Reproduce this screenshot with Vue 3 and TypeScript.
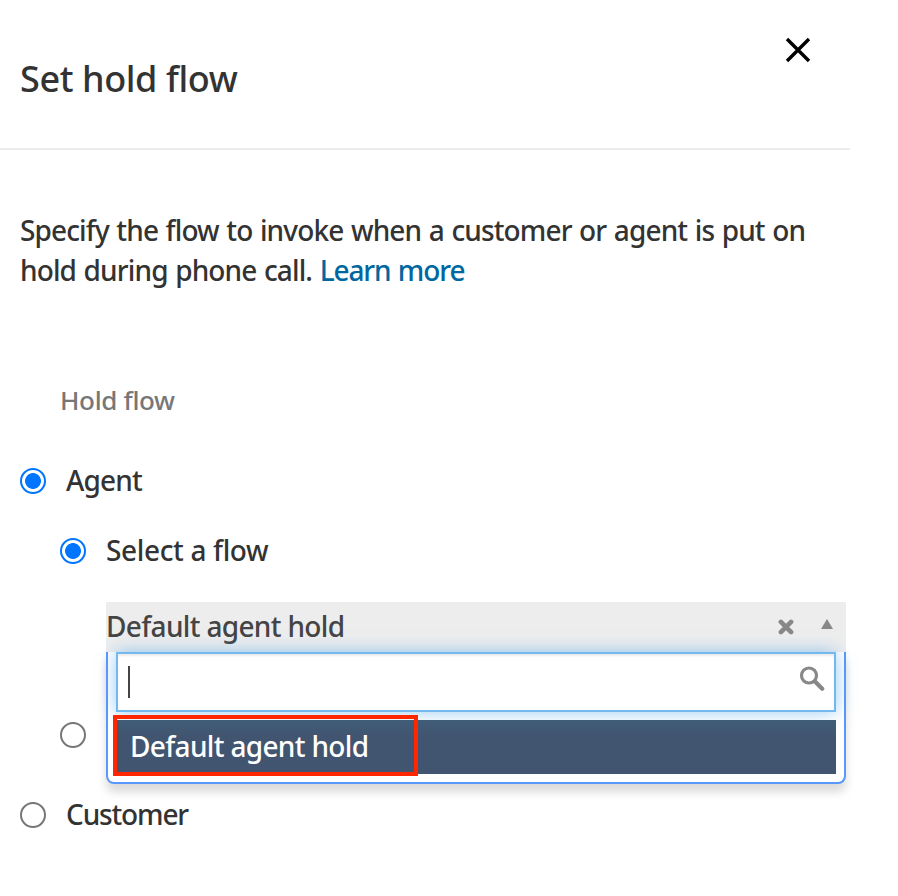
<script setup lang="ts">
import { ref } from 'vue'

const target = ref<'agent' | 'customer'>('agent')
const source = ref<'flow' | 'attribute'>('flow')
const selectedFlow = ref('Default agent hold')
const flows: string[] = ['Default agent hold']
</script>

<template>
  <main class="dialog">
    <header class="header">
      <h1 class="title">Set hold flow</h1>
      <button class="close" type="button" aria-label="Close">
        <svg width="26" height="26" viewBox="0 0 26 26">
          <path d="M2 2 24 24M24 2 2 24" fill="none" stroke="#000" stroke-width="3.4" />
        </svg>
      </button>
    </header>

    <p class="intro">
      Specify the flow to invoke when a customer or agent is put on<br />
      hold during phone call. <a>Learn more</a>
    </p>

    <h2 class="section">Hold flow</h2>

    <div class="row agent" @click="target = 'agent'">
      <span class="radio" :class="{ on: target === 'agent' }"></span>
      <span class="label">Agent</span>
    </div>

    <div class="nested">
      <div class="row" @click="source = 'flow'">
        <span class="radio" :class="{ on: source === 'flow' }"></span>
        <span class="label wide">Select a flow</span>
      </div>

      <div class="select">
        <div class="field">
          <span class="value">{{ selectedFlow }}</span>
          <svg class="clear" width="16" height="16" viewBox="0 0 16 16">
            <path d="M2.9 2.9 13.1 13.1M13.1 2.9 2.9 13.1" fill="none" stroke="#888" stroke-width="4.6" stroke-linecap="round" />
          </svg>
          <svg class="arrow" width="12" height="10" viewBox="0 0 12 10">
            <path d="M6 0 12 10H0z" fill="#888" />
          </svg>
        </div>
        <div class="panel">
          <div class="search">
            <span class="caret"></span>
            <svg class="glass" width="26" height="26" viewBox="0 0 26 26">
              <circle cx="10" cy="9.5" r="7.5" fill="none" stroke="#888" stroke-width="3.2" />
              <path d="M15.8 15.3 23.2 22.7" fill="none" stroke="#888" stroke-width="4.2" stroke-linecap="round" />
            </svg>
          </div>
          <div v-for="flow in flows" :key="flow" class="option">
            <span>{{ flow }}</span>
            <span class="highlight"></span>
          </div>
        </div>
      </div>

      <div class="row" @click="source = 'attribute'">
        <span class="radio" :class="{ on: source === 'attribute' }"></span>
      </div>
    </div>

    <div class="row customer" @click="target = 'customer'">
      <span class="radio" :class="{ on: target === 'customer' }"></span>
      <span class="label narrow">Customer</span>
    </div>
  </main>
</template>

<style>
body {
  background: #fff;
}
</style>

<style scoped>
.dialog {
  box-sizing: border-box;
  width: 850px;
  height: 896px;
  color: #333;
  font-family: "Noto Sans", "Open Sans", sans-serif;
  font-size: 28px;
  font-weight: 500;
  letter-spacing: -0.66px;
  line-height: 40px;
  white-space: nowrap;
}
.header {
  box-sizing: border-box;
  display: flex;
  justify-content: space-between;
  align-items: flex-start;
  height: 150px;
  padding: 37px 39px 0 20px;
  border-bottom: 2px solid #ededed;
}
.title {
  margin: 17px 0 0;
  font-size: 36px;
  font-weight: 500;
  letter-spacing: -0.4px;
  line-height: 50px;
}
.close {
  display: flex;
  padding: 0;
  border: 0;
  background: none;
}
.intro {
  margin: 60px 0 0 20px;
  letter-spacing: -0.87px;
  word-spacing: 1.1px;
}
.intro a {
  color: #0067a0;
  letter-spacing: -1.1px;
}
.section {
  margin: 90px 0 0 60px;
  color: #777;
  font-size: 26px;
  font-weight: 500;
  letter-spacing: -0.35px;
  line-height: 40px;
}
.row {
  display: flex;
  align-items: center;
  gap: 20px;
  height: 40px;
}
.label {
  padding-bottom: 2px;
  letter-spacing: -0.85px;
}
.label.wide {
  letter-spacing: -0.35px;
}
.label.narrow {
  letter-spacing: -1.15px;
}
.agent {
  margin: 41px 0 0 20px;
}
.nested {
  margin: 30px 0 0 60px;
}
.radio {
  box-sizing: border-box;
  flex: none;
  width: 26px;
  height: 26px;
  border: 2px solid #767676;
  border-radius: 50%;
  background: #fff;
}
.radio.on {
  border-color: #0075ff;
  background: radial-gradient(circle, #0075ff 7.5px, #fff 8.3px);
}
.select {
  position: relative;
  width: 740px;
  height: 50px;
  margin: 31px 0 63px 46px;
}
.field {
  box-sizing: border-box;
  display: flex;
  align-items: center;
  height: 50px;
  padding-right: 13px;
  background: #ededed;
  color: #444;
}
.value {
  flex: 1;
  padding-bottom: 2px;
}
.clear {
  margin: 0 27.5px 0 0;
}
.arrow {
  margin-top: -6px;
}
.panel {
  box-sizing: border-box;
  position: absolute;
  top: 50px;
  left: 0;
  width: 740px;
  height: 132px;
  padding: 0 8px;
  border: 2px solid #5897fb;
  border-top: 0;
  border-radius: 0 0 8px 8px;
  background: #fff;
  box-shadow: 0 8px 10px rgba(0, 0, 0, 0.15);
}
.search {
  box-sizing: border-box;
  display: flex;
  justify-content: space-between;
  height: 60px;
  padding: 12px 9px 0 10px;
  border: 2px solid #73b9f0;
  background: #fff;
  box-shadow: inset 0 2px 2px rgba(0, 0, 0, 0.08), 0 0 16px rgba(82, 168, 236, 0.6);
}
.caret {
  width: 2px;
  height: 32px;
  background: #444;
}
.option {
  position: relative;
  height: 54px;
  margin-top: 8px;
  padding-left: 14px;
  background: linear-gradient(#405d78, #415570 16px, #415570);
  color: #fff;
  line-height: 52px;
}
.highlight {
  box-sizing: border-box;
  position: absolute;
  top: -5px;
  left: -3px;
  width: 305px;
  height: 61px;
  border: 4px solid #ff2600;
}
.customer {
  margin: 40px 0 0 20px;
}
</style>
